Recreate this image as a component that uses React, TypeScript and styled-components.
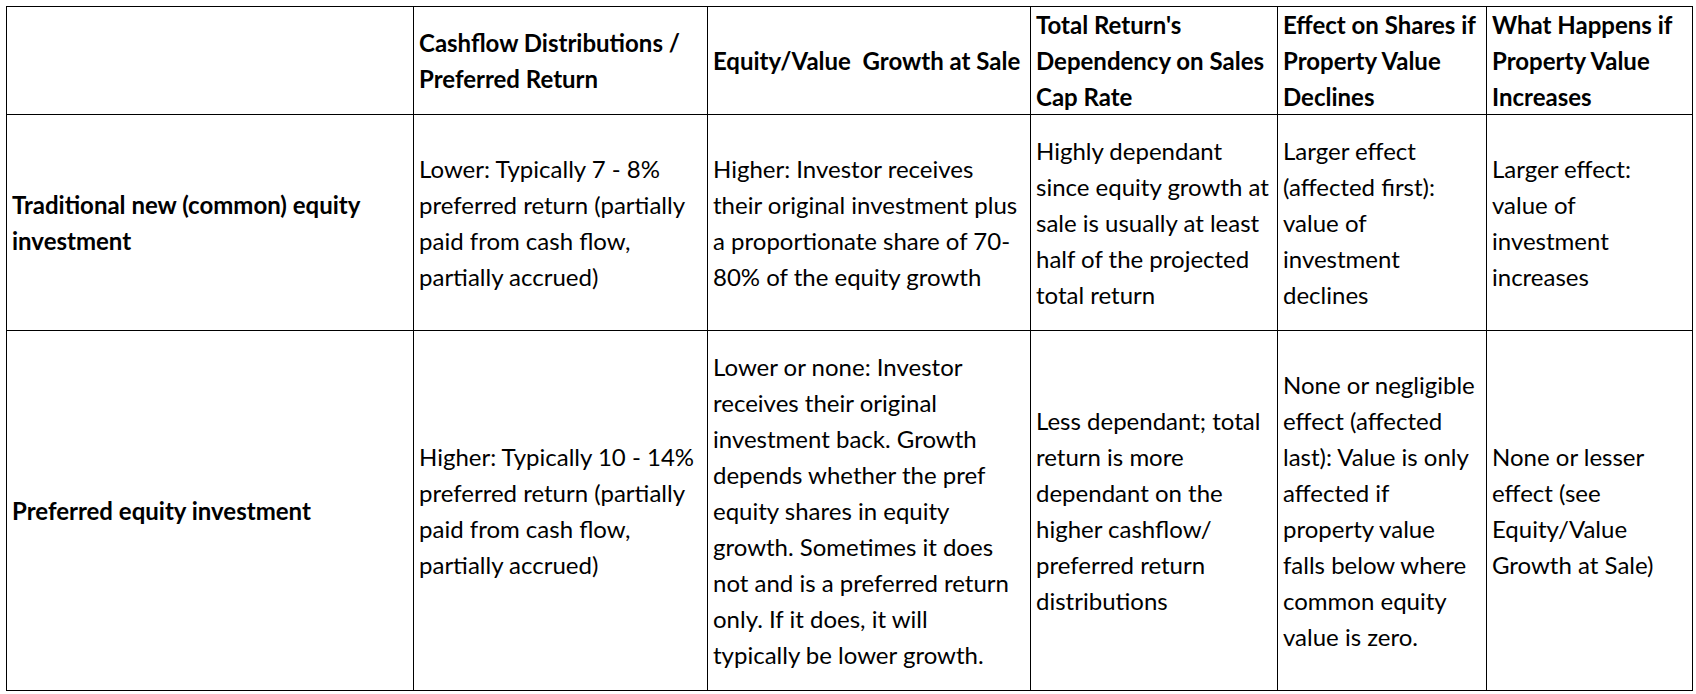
import React from "react";
import styled, { createGlobalStyle } from "styled-components";

const GlobalStyle = createGlobalStyle`
  html, body { margin: 0; padding: 0; background: #ffffff; }
  body { font-family: Lato, "Open Sans", sans-serif; color: #000; }
`;

const Page = styled.div`
  padding: 6px;
  width: 1696px;
  box-sizing: border-box;
`;

const Table = styled.div`
  display: grid;
  grid-template-columns: 406px 293px 322px 246px 208px 205px;
  grid-template-rows: 107px 215px 359px;
  gap: 1px;
  padding: 1px;
  background: #000;
  width: max-content;
`;

const Cell = styled.div<{ $bold?: boolean }>`
  background: #fff;
  display: flex;
  flex-direction: column;
  justify-content: center;
  padding: 0 4px 0 5px;
  font-size: 24px;
  line-height: 36px;
  font-weight: ${(p) => (p.$bold ? 700 : 400)};
  white-space: pre;
  overflow: hidden;
`;

const Line = styled.span`
  display: block;
`;

type Row = { bold: boolean[]; cells: string[][] };

const header: string[][] = [
  [],
  ["Cashflow Distributions /", "Preferred Return"],
  ["Equity/Value  Growth at Sale"],
  ["Total Return's", "Dependency on Sales", "Cap Rate"],
  ["Effect on Shares if", "Property Value", "Declines"],
  ["What Happens if", "Property Value", "Increases"],
];

const rows: string[][][] = [
  [
    ["Traditional new (common) equity", "investment"],
    ["Lower: Typically 7 - 8%", "preferred return (partially", "paid from cash flow,", "partially accrued)"],
    [
      "Higher: Investor receives",
      "their original investment plus",
      "a proportionate share of 70-",
      "80% of the equity growth",
    ],
    [
      "Highly dependant",
      "since equity growth at",
      "sale is usually at least",
      "half of the projected",
      "total return",
    ],
    ["Larger effect", "(affected first):", "value of", "investment", "declines"],
    ["Larger effect:", "value of", "investment", "increases"],
  ],
  [
    ["Preferred equity investment"],
    ["Higher: Typically 10 - 14%", "preferred return (partially", "paid from cash flow,", "partially accrued)"],
    [
      "Lower or none: Investor",
      "receives their original",
      "investment back. Growth",
      "depends whether the pref",
      "equity shares in equity",
      "growth. Sometimes it does",
      "not and is a preferred return",
      "only. If it does, it will",
      "typically be lower growth.",
    ],
    [
      "Less dependant; total",
      "return is more",
      "dependant on the",
      "higher cashflow/",
      "preferred return",
      "distributions",
    ],
    [
      "None or negligible",
      "effect (affected",
      "last): Value is only",
      "affected if",
      "property value",
      "falls below where",
      "common equity",
      "value is zero.",
    ],
    ["None or lesser", "effect (see", "Equity/Value", "Growth at Sale)"],
  ],
];

const renderLines = (lines: string[]) =>
  lines.map((l, i) => <Line key={i}>{l}</Line>);

export default function App() {
  return (
    <Page>
      <GlobalStyle />
      <Table>
        {header.map((c, i) => (
          <Cell key={`h${i}`} $bold>
            {renderLines(c)}
          </Cell>
        ))}
        {rows.map((r, ri) =>
          r.map((c, ci) => (
            <Cell key={`r${ri}c${ci}`} $bold={ci === 0}>
              {renderLines(c)}
            </Cell>
          ))
        )}
      </Table>
    </Page>
  );
}
